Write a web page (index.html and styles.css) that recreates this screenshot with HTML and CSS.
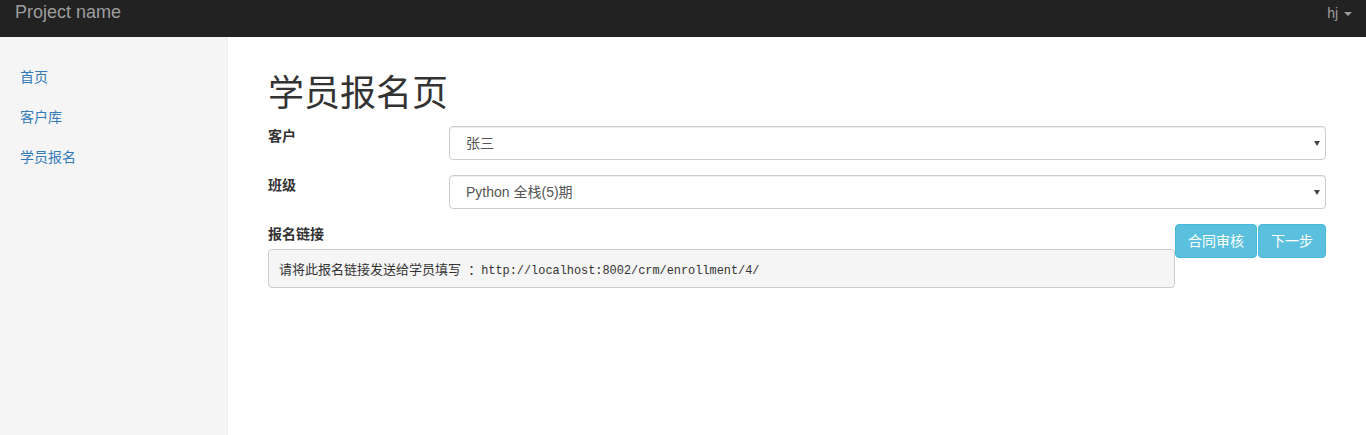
FILE: index.html
```html
<!DOCTYPE html>
<html lang="zh-CN">
<head>
<meta charset="utf-8">
<title>学员报名页</title>
<link rel="stylesheet" href="styles.css">
</head>
<body>
<nav class="navbar">
  <a class="brand" href="#">Project name</a>
  <a class="user" href="#">hj <span class="caret"></span></a>
</nav>
<div class="layout">
  <aside class="sidebar">
    <ul class="nav-sidebar">
      <li><a href="#">首页</a></li>
      <li><a href="#">客户库</a></li>
      <li><a href="#">学员报名</a></li>
    </ul>
  </aside>
  <main class="main">
    <h1 class="page-title">学员报名页</h1>
    <form class="form">
      <div class="form-group">
        <label class="form-label">客户</label>
        <div class="select-wrap">
          <select class="form-control">
            <option>张三</option>
          </select>
        </div>
      </div>
      <div class="form-group">
        <label class="form-label">班级</label>
        <div class="select-wrap">
          <select class="form-control">
            <option>Python 全栈(5)期</option>
          </select>
        </div>
      </div>
      <div class="link-row">
        <div class="link-col">
          <label class="form-label">报名链接</label>
          <pre class="link-box">请将此报名链接发送给学员填写<span class="url"> </span>：<span class="url">http://localhost:8002/crm/enrollment/4/</span></pre>
        </div>
        <div class="btns">
          <button type="button" class="btn">合同审核</button>
          <button type="button" class="btn">下一步</button>
        </div>
      </div>
    </form>
  </main>
</div>
</body>
</html>
```

FILE: styles.css
```css
* { box-sizing: border-box; }
html, body { margin: 0; padding: 0; height: 100%; }
body {
  font-family: "Liberation Sans", Arial, "Noto Sans CJK SC", sans-serif;
  font-size: 14px;
  line-height: 20px;
  color: #333;
  background: #fff;
  display: flex;
  flex-direction: column;
}
a { text-decoration: none; }

.navbar {
  height: 37px;
  background: #222;
  display: flex;
  justify-content: space-between;
  align-items: flex-start;
  flex-shrink: 0;
}
.brand {
  color: #9d9d9d;
  font-size: 18px;
  line-height: 20px;
  padding: 2px 15px 0 15px;
}
.user {
  color: #9d9d9d;
  font-size: 14px;
  line-height: 20px;
  padding: 3px 14px 0 0;
}
.caret {
  display: inline-block;
  width: 0;
  height: 0;
  margin-left: 2px;
  vertical-align: middle;
  border-top: 4px solid #9d9d9d;
  border-left: 4px solid transparent;
  border-right: 4px solid transparent;
}

.layout {
  flex: 1;
  display: flex;
}
.sidebar {
  width: 228px;
  flex-shrink: 0;
  background: #f5f5f5;
  border-right: 1px solid #eee;
  padding: 20px 0;
}
.nav-sidebar {
  list-style: none;
  margin: 0;
  padding: 0;
}
.nav-sidebar a {
  display: block;
  padding: 10px 20px;
  color: #337ab7;
  font-size: 14px;
  line-height: 20px;
}

.main {
  flex: 1;
  padding: 37px 40px 0 40px;
}
.page-title {
  font-family: "Liberation Sans", Arial, "Noto Sans CJK SC", sans-serif;
  font-weight: 400;
  font-size: 36px;
  line-height: 40px;
  margin: 0 0 12px 0;
  color: #333;
}

.form-group {
  display: flex;
  align-items: flex-start;
  margin-bottom: 15px;
}
.form-label {
  display: block;
  width: 181px;
  flex-shrink: 0;
  font-weight: 700;
  font-size: 14px;
  line-height: 20px;
  color: #333;
}
.select-wrap {
  flex: 1;
  position: relative;
}
.select-wrap::after {
  content: "";
  position: absolute;
  right: 6px;
  top: 15px;
  border-top: 5px solid #444;
  border-left: 3px solid transparent;
  border-right: 3px solid transparent;
}
.form-control {
  display: block;
  width: 100%;
  height: 34px;
  padding: 6px 16px;
  font-family: "Liberation Sans", Arial, "Noto Sans CJK SC", sans-serif;
  font-size: 14px;
  line-height: 20px;
  color: #555;
  background: #fff;
  border: 1px solid #ccc;
  border-radius: 4px;
  box-shadow: inset 0 1px 1px rgba(0,0,0,.075);
  appearance: none;
  -webkit-appearance: none;
}

.link-row {
  display: flex;
  align-items: flex-start;
}
.link-col {
  flex: 1;
  min-width: 0;
}
.link-col .form-label {
  width: auto;
  margin-bottom: 5px;
}
.link-box {
  margin: 0;
  height: 39px;
  padding: 9.5px 10px;
  font-family: "Noto Sans CJK SC", monospace;
  font-size: 13px;
  line-height: 18px;
  color: #333;
  background: #f5f5f5;
  border: 1px solid #ccc;
  border-radius: 4px;
  white-space: pre;
  overflow: hidden;
}
.url {
  font-family: "Liberation Mono", "Courier New", monospace;
  font-size: 11.9px;
  line-height: 0;
}
.btns {
  display: flex;
  gap: 1px;
  flex-shrink: 0;
}
.btn {
  height: 34px;
  padding: 6px 12px;
  font-family: "Liberation Sans", Arial, "Noto Sans CJK SC", sans-serif;
  font-size: 14px;
  line-height: 20px;
  color: #fff;
  background: #5bc0de;
  border: 1px solid #46b8da;
  border-radius: 4px;
  cursor: pointer;
}
```
